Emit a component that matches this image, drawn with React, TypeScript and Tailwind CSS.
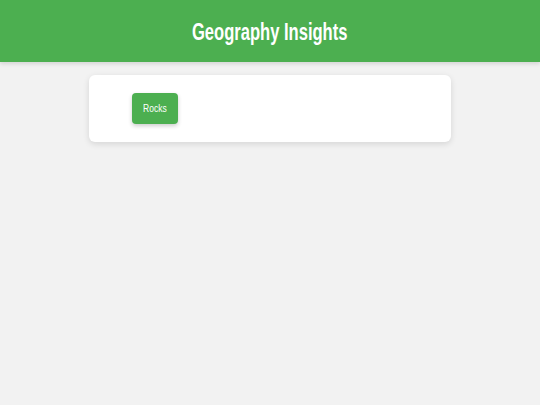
import React from 'react';

const App: React.FC = () => {
  return (
    <div className="min-h-[405px] w-full bg-[#f2f2f2]" style={{ fontFamily: '"Liberation Sans", Arial, sans-serif' }}>
      <header className="flex h-[62px] items-center justify-center bg-[#4caf50] shadow-[0_2px_4px_rgba(0,0,0,0.12)]">
        <h1 className="inline-block scale-x-[0.69] pt-[2px] text-[24px] font-bold text-white">Geography Insights</h1>
      </header>

      <main className="flex justify-center pt-[13px]">
        <div className="flex w-[362px] rounded-md bg-white py-[18px] pl-[43px] shadow-[0_2px_6px_rgba(0,0,0,0.12)]">
          <button className="flex h-[31px] w-[46px] items-center justify-center rounded bg-[#4caf50] text-white shadow-[0_2px_4px_rgba(0,0,0,0.2)]">
            <span className="inline-block scale-x-[0.85] text-[10px]">Rocks</span>
          </button>
        </div>
      </main>
    </div>
  );
};

export default App;
